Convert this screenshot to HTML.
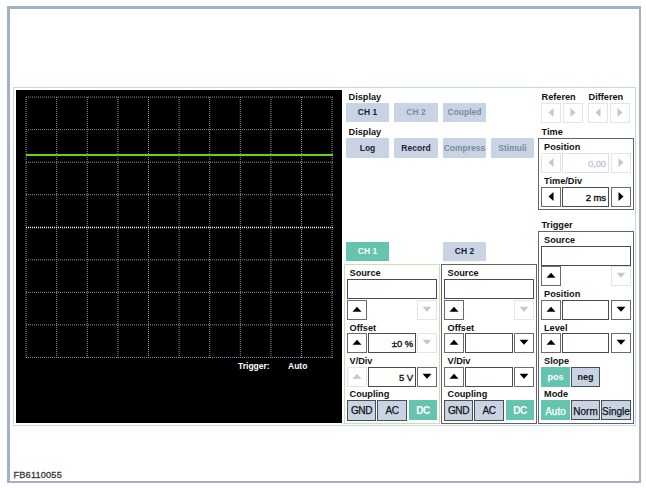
<!DOCTYPE html>
<html><head><meta charset="utf-8"><style>
html,body{margin:0;padding:0;background:#fff;width:646px;height:488px;overflow:hidden;position:relative;font-family:"Liberation Sans",sans-serif}
.r,.t,.b,.f{position:absolute;box-sizing:border-box}
.t{white-space:nowrap;line-height:normal}
.b{text-align:center;font-weight:bold;white-space:nowrap;overflow:visible}
.n{-webkit-text-stroke:0.25px currentColor}
.f{background:#fff;text-align:right;padding-right:2px;font-weight:normal;white-space:nowrap;-webkit-text-stroke:0.35px currentColor;letter-spacing:-0.1px}
svg{pointer-events:none}
</style></head><body>
<div class="r" style="left:7px;top:6px;width:634px;height:477px;border-style:solid;border-color:#a4b0c6;border-width:3px 2px 2px 3px"></div>
<div class="r" style="left:13px;top:87px;width:623px;height:339px;border:1px solid #c4dcd8"></div>
<div class="r" style="left:16px;top:90px;width:326px;height:333px;background:#000"></div>
<svg class="r" style="left:0;top:0" width="646" height="488"><line x1="26.1" y1="97" x2="26.1" y2="358" stroke="#9094a0" stroke-dasharray="1 1"/><line x1="56.7" y1="97" x2="56.7" y2="358" stroke="#9094a0" stroke-dasharray="1 1"/><line x1="87.3" y1="97" x2="87.3" y2="358" stroke="#9094a0" stroke-dasharray="1 1"/><line x1="117.9" y1="97" x2="117.9" y2="358" stroke="#9094a0" stroke-dasharray="1 1"/><line x1="148.5" y1="97" x2="148.5" y2="358" stroke="#9094a0" stroke-dasharray="1 1"/><line x1="179.1" y1="97" x2="179.1" y2="358" stroke="#9094a0" stroke-dasharray="1 1"/><line x1="209.7" y1="97" x2="209.7" y2="358" stroke="#9094a0" stroke-dasharray="1 1"/><line x1="240.3" y1="97" x2="240.3" y2="358" stroke="#9094a0" stroke-dasharray="1 1"/><line x1="270.9" y1="97" x2="270.9" y2="358" stroke="#9094a0" stroke-dasharray="1 1"/><line x1="301.5" y1="97" x2="301.5" y2="358" stroke="#9094a0" stroke-dasharray="1 1"/><line x1="332.1" y1="97" x2="332.1" y2="358" stroke="#9094a0" stroke-dasharray="1 1"/><line x1="26" y1="97.1" x2="333" y2="97.1" stroke="#9094a0" stroke-dasharray="1 1"/><line x1="26" y1="129.64" x2="333" y2="129.64" stroke="#9094a0" stroke-dasharray="1 1"/><line x1="26" y1="162.18" x2="333" y2="162.18" stroke="#9094a0" stroke-dasharray="1 1"/><line x1="26" y1="194.72" x2="333" y2="194.72" stroke="#9094a0" stroke-dasharray="1 1"/><line x1="26" y1="227.5" x2="333" y2="227.5" stroke="#f4f4f8" stroke-width="1.4" stroke-dasharray="1 1"/><line x1="26" y1="259.8" x2="333" y2="259.8" stroke="#9094a0" stroke-dasharray="1 1"/><line x1="26" y1="292.34" x2="333" y2="292.34" stroke="#9094a0" stroke-dasharray="1 1"/><line x1="26" y1="324.88" x2="333" y2="324.88" stroke="#9094a0" stroke-dasharray="1 1"/><line x1="26" y1="357.42" x2="333" y2="357.42" stroke="#9094a0" stroke-dasharray="1 1"/><rect x="26" y="154" width="307" height="2" fill="#62d41e"/></svg>
<div class="t" style="left:238px;top:361.31px;font-size:8.5px;color:#fff;font-weight:bold;">Trigger:</div>
<div class="t" style="left:288px;top:361.31px;font-size:8.5px;color:#fff;font-weight:bold;">Auto</div>
<div class="t" style="left:348.5px;top:91.67px;font-size:9.2px;color:#111;font-weight:bold;">Display</div>
<div class="b" style="left:346px;top:103px;width:43px;height:19px;line-height:19px;letter-spacing:0px;background:#c8d4e4;color:#1e2430;border:none;font-size:8.5px;font-weight:bold">CH 1</div>
<div class="b" style="left:394px;top:103px;width:44px;height:19px;line-height:19px;letter-spacing:0px;background:#c8d4e4;color:#7c8b9c;border:none;font-size:8.5px;font-weight:bold">CH 2</div>
<div class="b" style="left:443px;top:103px;width:43px;height:19px;line-height:19px;letter-spacing:0px;background:#c8d4e4;color:#7c8b9c;border:none;font-size:8.5px;font-weight:bold">Coupled</div>
<div class="t" style="left:348.5px;top:126.67px;font-size:9.2px;color:#111;font-weight:bold;">Display</div>
<div class="b" style="left:346px;top:138px;width:43px;height:20px;line-height:20px;letter-spacing:0px;background:#c8d4e4;color:#1e2430;border:none;font-size:8.5px;font-weight:bold">Log</div>
<div class="b" style="left:394px;top:138px;width:44px;height:20px;line-height:20px;letter-spacing:0px;background:#c8d4e4;color:#1e2430;border:none;font-size:8.5px;font-weight:bold">Record</div>
<div class="b" style="left:443px;top:138px;width:43px;height:20px;line-height:20px;letter-spacing:0px;background:#c8d4e4;color:#7c8b9c;border:none;font-size:8.5px;font-weight:bold">Compress</div>
<div class="b" style="left:491px;top:138px;width:43px;height:20px;line-height:20px;letter-spacing:0px;background:#c8d4e4;color:#7c8b9c;border:none;font-size:8.5px;font-weight:bold">Stimuli</div>
<div class="t" style="left:541.5px;top:91.67px;font-size:9.2px;color:#111;font-weight:bold;">Referen</div>
<div class="t" style="left:588.5px;top:91.67px;font-size:9.2px;color:#111;font-weight:bold;">Differen</div>
<div class="r" style="left:541px;top:103px;width:20px;height:20px;border:1px solid #e2e4ea;background:#fff"></div>
<div class="r" style="left:563px;top:103px;width:20px;height:20px;border:1px solid #e2e4ea;background:#fff"></div>
<div class="r" style="left:588px;top:103px;width:20px;height:20px;border:1px solid #e2e4ea;background:#fff"></div>
<div class="r" style="left:610px;top:103px;width:20px;height:20px;border:1px solid #e2e4ea;background:#fff"></div>
<div class="t" style="left:541.5px;top:127.17px;font-size:9.2px;color:#111;font-weight:bold;">Time</div>
<div class="r" style="left:538px;top:138px;width:96px;height:72px;border:1px solid #646468"></div>
<div class="t" style="left:544px;top:142.17px;font-size:9.2px;color:#111;font-weight:bold;">Position</div>
<div class="r" style="left:541px;top:153px;width:20px;height:20px;border:1px solid #e2e4ea;background:#fff"></div>
<div class="f" style="left:562px;top:153px;width:47px;height:20px;line-height:20px;border:1px solid #dcdfe6;color:#c0c8d4;font-size:9.5px">0,00</div>
<div class="r" style="left:611px;top:153px;width:20px;height:20px;border:1px solid #e2e4ea;background:#fff"></div>
<div class="t" style="left:544px;top:175.67px;font-size:9.2px;color:#111;font-weight:bold;">Time/Div</div>
<div class="r" style="left:541px;top:187px;width:20px;height:20px;border:1px solid #6a6a72;background:#fff"></div>
<div class="f" style="left:562px;top:187px;width:47px;height:20px;line-height:20px;border:1px solid #4a4a50;color:#111;font-size:9.5px">2 ms</div>
<div class="r" style="left:611px;top:187px;width:20px;height:20px;border:1px solid #6a6a72;background:#fff"></div>
<div class="t" style="left:541.5px;top:220.17px;font-size:9.2px;color:#111;font-weight:bold;">Trigger</div>
<div class="r" style="left:538px;top:231px;width:96px;height:193px;border:1px solid #646468"></div>
<div class="t" style="left:544px;top:235.17px;font-size:9.2px;color:#111;font-weight:bold;">Source</div>
<div class="f" style="left:541px;top:246px;width:90px;height:20px;line-height:20px;border:1px solid #4a4a50;color:#111;font-size:9.5px"></div>
<div class="r" style="left:541px;top:266px;width:20px;height:20px;border:1px solid #6a6a72;background:#fff"></div>
<div class="r" style="left:611px;top:266px;width:20px;height:20px;border:1px solid #e2e4ea;background:#fff"></div>
<div class="t" style="left:544px;top:289.17px;font-size:9.2px;color:#111;font-weight:bold;">Position</div>
<div class="r" style="left:541px;top:300px;width:20px;height:20px;border:1px solid #6a6a72;background:#fff"></div>
<div class="f" style="left:562px;top:300px;width:47px;height:20px;line-height:20px;border:1px solid #4a4a50;color:#111;font-size:9.5px"></div>
<div class="r" style="left:611px;top:300px;width:20px;height:20px;border:1px solid #6a6a72;background:#fff"></div>
<div class="t" style="left:544px;top:322.67px;font-size:9.2px;color:#111;font-weight:bold;">Level</div>
<div class="r" style="left:541px;top:333px;width:20px;height:20px;border:1px solid #6a6a72;background:#fff"></div>
<div class="f" style="left:562px;top:333px;width:47px;height:20px;line-height:20px;border:1px solid #4a4a50;color:#111;font-size:9.5px"></div>
<div class="r" style="left:611px;top:333px;width:20px;height:20px;border:1px solid #6a6a72;background:#fff"></div>
<div class="t" style="left:544px;top:355.67px;font-size:9.2px;color:#111;font-weight:bold;">Slope</div>
<div class="b" style="left:541px;top:367px;width:29px;height:20px;line-height:20px;letter-spacing:0px;background:#64c4b0;color:#fff;border:none;font-size:9px;font-weight:bold">pos</div>
<div class="b" style="left:571px;top:367px;width:29px;height:20px;line-height:18px;letter-spacing:0px;background:#c8d4e4;color:#111;border:1px solid #4a4e58;font-size:9px;font-weight:bold">neg</div>
<div class="t" style="left:544px;top:389.17px;font-size:9.2px;color:#111;font-weight:bold;">Mode</div>
<div class="b n" style="left:541px;top:400px;width:29px;height:20px;line-height:23px;letter-spacing:0px;background:#64c4b0;color:#fff;border:none;font-size:10px;font-weight:normal">Auto</div>
<div class="b n" style="left:571px;top:400px;width:29px;height:20px;line-height:21px;letter-spacing:0px;background:#c8d4e4;color:#111;border:1px solid #4a4e58;font-size:10px;font-weight:normal">Norm</div>
<div class="b n" style="left:601px;top:400px;width:30px;height:20px;line-height:21px;letter-spacing:0px;background:#c8d4e4;color:#111;border:1px solid #4a4e58;font-size:10px;font-weight:normal">Single</div>
<div class="b" style="left:346px;top:242px;width:43px;height:19px;line-height:19px;letter-spacing:0px;background:#64c4b0;color:#fff;border:none;font-size:8.5px;font-weight:bold">CH 1</div>
<div class="b" style="left:443px;top:242px;width:43px;height:19px;line-height:19px;letter-spacing:0px;background:#c8d4e4;color:#1e2430;border:none;font-size:8.5px;font-weight:bold">CH 2</div>
<div class="r" style="left:344px;top:264px;width:96px;height:160px;border:1px solid #bfe6ac"></div>
<div class="t" style="left:349.5px;top:268.17px;font-size:9.2px;color:#111;font-weight:bold;">Source</div>
<div class="f" style="left:347px;top:279px;width:90px;height:20px;line-height:20px;border:1px solid #4a4a50;color:#111;font-size:9.5px"></div>
<div class="r" style="left:347px;top:300px;width:20px;height:20px;border:1px solid #6a6a72;background:#fff"></div>
<div class="r" style="left:417px;top:300px;width:20px;height:20px;border:1px solid #e2e4ea;background:#fff"></div>
<div class="t" style="left:349.5px;top:322.67px;font-size:9.2px;color:#111;font-weight:bold;">Offset</div>
<div class="r" style="left:347px;top:333px;width:20px;height:20px;border:1px solid #6a6a72;background:#fff"></div>
<div class="f" style="left:368px;top:333px;width:48px;height:20px;line-height:20px;border:1px solid #4a4a50;color:#111;font-size:9.5px">&plusmn;0 %</div>
<div class="r" style="left:417px;top:333px;width:20px;height:20px;border:1px solid #e2e4ea;background:#fff"></div>
<div class="t" style="left:349.5px;top:355.67px;font-size:9.2px;color:#111;font-weight:bold;">V/Div</div>
<div class="r" style="left:347px;top:367px;width:20px;height:20px;border:1px solid #e2e4ea;background:#fff"></div>
<div class="f" style="left:368px;top:367px;width:48px;height:20px;line-height:20px;border:1px solid #4a4a50;color:#111;font-size:9.5px">5 V</div>
<div class="r" style="left:417px;top:367px;width:20px;height:20px;border:1px solid #6a6a72;background:#fff"></div>
<div class="t" style="left:349.5px;top:388.67px;font-size:9.2px;color:#111;font-weight:bold;">Coupling</div>
<div class="b n" style="left:347px;top:400px;width:29px;height:21px;line-height:20px;letter-spacing:-0.4px;background:#c8d4e4;color:#111;border:1px solid #4a4e58;font-size:10px;font-weight:normal">GND</div>
<div class="b n" style="left:377px;top:400px;width:30px;height:21px;line-height:20px;letter-spacing:-0.4px;background:#c8d4e4;color:#111;border:1px solid #4a4e58;font-size:10px;font-weight:normal">AC</div>
<div class="b" style="left:409px;top:400px;width:28px;height:20px;line-height:22px;letter-spacing:-0.5px;background:#64c4b0;color:#fff;border:none;font-size:10px;font-weight:bold">DC</div>
<div class="r" style="left:441px;top:264px;width:96px;height:160px;border:1px solid #646468"></div>
<div class="t" style="left:447.5px;top:268.17px;font-size:9.2px;color:#111;font-weight:bold;">Source</div>
<div class="f" style="left:444px;top:279px;width:90px;height:20px;line-height:20px;border:1px solid #4a4a50;color:#111;font-size:9.5px"></div>
<div class="r" style="left:444px;top:300px;width:20px;height:20px;border:1px solid #6a6a72;background:#fff"></div>
<div class="r" style="left:514px;top:300px;width:20px;height:20px;border:1px solid #e2e4ea;background:#fff"></div>
<div class="t" style="left:447.5px;top:322.67px;font-size:9.2px;color:#111;font-weight:bold;">Offset</div>
<div class="r" style="left:444px;top:333px;width:20px;height:20px;border:1px solid #6a6a72;background:#fff"></div>
<div class="f" style="left:465px;top:333px;width:48px;height:20px;line-height:20px;border:1px solid #4a4a50;color:#111;font-size:9.5px"></div>
<div class="r" style="left:514px;top:333px;width:20px;height:20px;border:1px solid #6a6a72;background:#fff"></div>
<div class="t" style="left:447.5px;top:355.67px;font-size:9.2px;color:#111;font-weight:bold;">V/Div</div>
<div class="r" style="left:444px;top:367px;width:20px;height:20px;border:1px solid #6a6a72;background:#fff"></div>
<div class="f" style="left:465px;top:367px;width:48px;height:20px;line-height:20px;border:1px solid #4a4a50;color:#111;font-size:9.5px"></div>
<div class="r" style="left:514px;top:367px;width:20px;height:20px;border:1px solid #6a6a72;background:#fff"></div>
<div class="t" style="left:447.5px;top:388.67px;font-size:9.2px;color:#111;font-weight:bold;">Coupling</div>
<div class="b n" style="left:444px;top:400px;width:29px;height:21px;line-height:20px;letter-spacing:-0.4px;background:#c8d4e4;color:#111;border:1px solid #4a4e58;font-size:10px;font-weight:normal">GND</div>
<div class="b n" style="left:474px;top:400px;width:30px;height:21px;line-height:20px;letter-spacing:-0.4px;background:#c8d4e4;color:#111;border:1px solid #4a4e58;font-size:10px;font-weight:normal">AC</div>
<div class="b" style="left:506px;top:400px;width:28px;height:20px;line-height:22px;letter-spacing:-0.5px;background:#64c4b0;color:#fff;border:none;font-size:10px;font-weight:bold">DC</div>
<div class="t" style="left:13.5px;top:469.67px;font-size:9.2px;color:#383838;font-weight:normal;-webkit-text-stroke:0.3px currentColor;letter-spacing:0.18px;">FB6110055</div>
<svg class="r" style="left:0;top:0" width="646" height="488"><polygon points="553.5,108.1 553.5,117.1 548.5,112.6" fill="#c2c9d3"/><polygon points="570.5,108.1 570.5,117.1 575.5,112.6" fill="#c2c9d3"/><polygon points="600.5,108.1 600.5,117.1 595.5,112.6" fill="#c2c9d3"/><polygon points="617.5,108.1 617.5,117.1 622.5,112.6" fill="#c2c9d3"/><polygon points="553.5,158.1 553.5,167.1 548.5,162.6" fill="#c2c9d3"/><polygon points="618.5,158.1 618.5,167.1 623.5,162.6" fill="#c2c9d3"/><polygon points="553.5,192.1 553.5,201.1 548.5,196.6" fill="#000"/><polygon points="618.5,192.1 618.5,201.1 623.5,196.6" fill="#000"/><polygon points="546.5,277.7 555.5,277.7 551.0,272.7" fill="#000"/><polygon points="616.5,272.7 625.5,272.7 621.0,277.7" fill="#c2c9d3"/><polygon points="546.5,311.7 555.5,311.7 551.0,306.7" fill="#000"/><polygon points="616.5,306.7 625.5,306.7 621.0,311.7" fill="#000"/><polygon points="546.5,344.7 555.5,344.7 551.0,339.7" fill="#000"/><polygon points="616.5,339.7 625.5,339.7 621.0,344.7" fill="#000"/><polygon points="352.5,311.7 361.5,311.7 357.0,306.7" fill="#000"/><polygon points="422.5,306.7 431.5,306.7 427.0,311.7" fill="#c2c9d3"/><polygon points="352.5,344.7 361.5,344.7 357.0,339.7" fill="#000"/><polygon points="422.5,339.7 431.5,339.7 427.0,344.7" fill="#c2c9d3"/><polygon points="352.5,378.7 361.5,378.7 357.0,373.7" fill="#c2c9d3"/><polygon points="422.5,373.7 431.5,373.7 427.0,378.7" fill="#000"/><polygon points="449.5,311.7 458.5,311.7 454.0,306.7" fill="#000"/><polygon points="519.5,306.7 528.5,306.7 524.0,311.7" fill="#c2c9d3"/><polygon points="449.5,344.7 458.5,344.7 454.0,339.7" fill="#000"/><polygon points="519.5,339.7 528.5,339.7 524.0,344.7" fill="#000"/><polygon points="449.5,378.7 458.5,378.7 454.0,373.7" fill="#000"/><polygon points="519.5,373.7 528.5,373.7 524.0,378.7" fill="#000"/></svg>
</body></html>
